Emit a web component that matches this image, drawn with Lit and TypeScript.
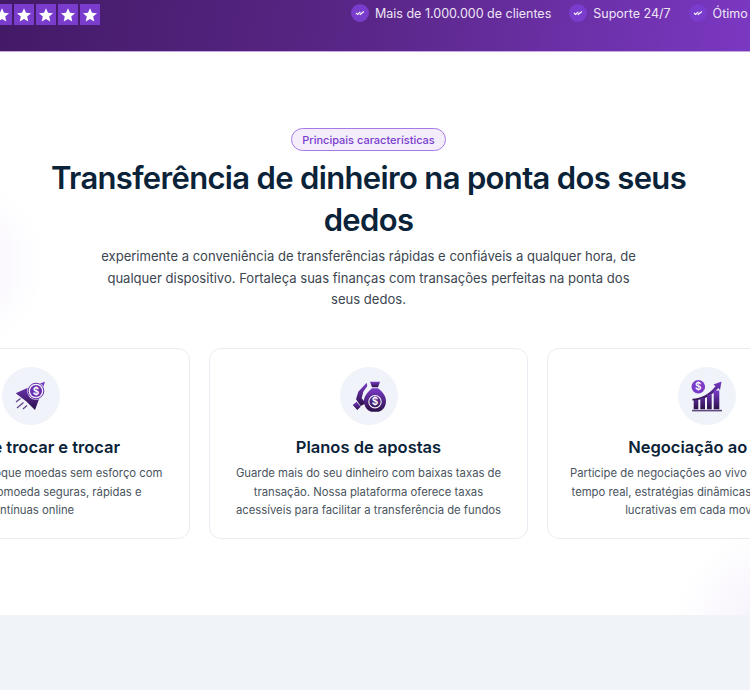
import { LitElement, html, css, svg } from "lit";
import { customElement } from "lit/decorators.js";

const star = html`<span class="star"><svg viewBox="0 0 20 20" width="20" height="20"><path d="M10 3.2l2 4.6 5 .5-3.8 3.3 1.1 4.9L10 14l-4.3 2.5 1.1-4.9L3 8.3l5-.5z" fill="#fff"/></svg></span>`;
const check = html`<span class="check"><svg viewBox="0 0 18 18" width="18" height="18"><path d="M5 9l1.6 1.400 2.700-2.600M8.700 10.200l.4.300 3.800-3" fill="none" stroke="#fff" stroke-width="1.100"/></svg></span>`;

const grad = (id: string) => svg`<defs><linearGradient id=${id} x1="0" y1="0" x2="0" y2="1"><stop offset="0" stop-color="#7a3bc8"/><stop offset="1" stop-color="#2b1048"/></linearGradient></defs>`;

const icon1 = html`<svg viewBox="0 0 58 58" width="58" height="58">${grad("g1")}
  <path d="M13.700 26.300L28 19.700L43 14.700L40 24L33 43L24.700 34.700z" fill="url(#g1)"/>
  <circle cx="34" cy="24" r="8.800" fill="#f0f3f9"/>
  <circle cx="34" cy="24" r="7.800" fill="none" stroke="#6a2fb0" stroke-width="1"/>
  <circle cx="34" cy="24" r="6" fill="#6a2fb0"/>
  <text x="34" y="27.600" text-anchor="middle" class="dollar" font-size="10">$</text>
  <path d="M14 35l4.500-3.500M15 41l6.500-5.500M21 42l4-3.500" stroke="#5b3a85" stroke-width="1.100" fill="none"/>
</svg>`;

const icon2 = html`<svg viewBox="0 0 58 58" width="58" height="58">${grad("g2")}
  <path d="M12.700 38L16.700 34.700L20.700 39.700L17.300 43z" fill="url(#g2)"/>
  <path d="M16 32.300L18.300 24.700L26.700 15.700L27.300 19L23.300 24.700L21.700 31.300L26 36.300L20.700 39z" fill="url(#g2)"/>
  <path d="M30 14.700h10l-2 5.600h-6z" fill="url(#g2)"/>
  <path d="M32 21.300h6c4 3 8 7.500 8 12.500 0 6-3.500 10.200-7.500 10.900h-7c-4-.7-7.500-4.900-7.500-10.900 0-5 4.500-9.500 8-12.500z" fill="url(#g2)"/>
  <circle cx="35" cy="34.700" r="6.200" fill="none" stroke="#f0f3f9" stroke-width="1.100"/>
  <text x="35" y="38.300" text-anchor="middle" class="dollar" font-size="10">$</text>
</svg>`;

const icon3 = html`<svg viewBox="0 0 58 58" width="58" height="58">${grad("g3")}
  <circle cx="20.300" cy="19.700" r="6.800" fill="#7a3bc8"/>
  <text x="20.300" y="23.300" text-anchor="middle" class="dollar" font-size="10">$</text>
  <path d="M14.500 31.800c9-.5 16-4 23-12.500l-2-1.700 8-3-1.500 8.300-1.800-1.800c-7 8.500-15 12-25.700 12.500z" fill="url(#g3)"/>
  <path d="M15.700 33h4.600v9.300h-4.600zM22.300 31h4.700v11.300h-4.700zM29 27.500h4.700v14.800H29zM35.700 23.500h5.600v18.800h-5.600z" fill="url(#g3)"/>
  <rect x="14" y="42.800" width="30" height="1.600" fill="#5f4a80"/>
</svg>`;

const cards = [
  { icon: icon1, title: "Fácil de trocar e trocar", lines: ["Compra, venda, troque moedas sem esforço com", "trocas de criptomoeda seguras, rápidas e", "contínuas online"] },
  { icon: icon2, title: "Planos de apostas", lines: ["Guarde mais do seu dinheiro com baixas taxas de", "transação. Nossa plataforma oferece taxas", "acessíveis para facilitar a transferência de fundos"] },
  { icon: icon3, title: "Negociação ao vivo", lines: ["Participe de negociações ao vivo com atualizações", "tempo real, estratégias dinâmicas e oportunidades", "lucrativas em cada movimento"] },
];

@customElement("app-root")
export class AppRoot extends LitElement {
  static styles = css`
    :host { display: block; width: 750px; height: 690px; overflow: hidden; font-family: "Inter", "Open Sans", sans-serif; background: #f0f3f8; }
    .bar { display: grid; grid-template-columns: 351px 1fr; height: 51px; padding-top: 4px; box-sizing: border-box; background: linear-gradient(100deg, #431a66 0%, #5a2789 50%, #7b38c2 100%); overflow: hidden; }
    .edge { height: 1px; background: #c6a9e2; }
    .stars { display: flex; gap: 2px; margin-left: -8px; height: 21px; }
    .star { display: flex; width: 20px; height: 21px; align-items: center; background: #7a3ccd; }
    .perks { display: flex; gap: 18px; height: 18px; white-space: nowrap; }
    .perk { display: flex; align-items: center; gap: 6px; font-size: 12.500px; color: #eee6f7; font-weight: 400; }
    .check { display: flex; width: 18px; height: 18px; border-radius: 50%; background: #7a3ccd; }
    .main { height: 563px; box-sizing: border-box; padding: 76px 13px 0 0; background:
        radial-gradient(circle at -40px 213px, #f6f1fc 0, #fff 85px) no-repeat left top / 120px 330px,
        radial-gradient(circle at 120px 100px, #f5f0fb 0, #fff 95px) no-repeat right bottom / 100px 90px,
        #fff; display: flex; flex-direction: column; align-items: center; }
    .pill { height: 23px; box-sizing: border-box; width: 155px; display: flex; align-items: center; justify-content: center; border: 1px solid #a67ae6; border-radius: 12px; background: #f4eefc; color: #7a3ccd; font-size: 11px; font-weight: 500; white-space: nowrap; }
    h1 { margin: 6px 0 5px; width: 660px; text-align: center; font-size: 31px; line-height: 42px; font-weight: 600; color: #0b2338; letter-spacing: -.66px; }
    .lead { margin: 0; width: 545px; text-align: center; font-size: 13.050px; line-height: 21.700px; color: #3c4650; }
    .cards { display: flex; gap: 19px; justify-content: center; margin-top: 37px; width: 737px; }
    .card { flex: none; width: 319px; height: 191px; box-sizing: border-box; border: 1px solid #e9ecf2; border-radius: 12px; background: #fff; padding: 18px 0 0; display: flex; flex-direction: column; align-items: center; text-align: center; }
    .disc { width: 58px; height: 58px; border-radius: 50%; background: #f0f3f9; flex: none; }
    .disc svg { display: block; }
    .dollar { fill: #fff; font-family: "Inter", sans-serif; font-weight: 600; }
    h3 { margin: 11px 0 6px; font-size: 16.500px; line-height: 22px; font-weight: 600; color: #0b2338; white-space: nowrap; }
    .card p { margin: 0; font-size: 11.300px; line-height: 18.500px; color: #4a545e; }
    .card p span { display: block; white-space: nowrap; }
  `;

  render() {
    return html`
      <div class="bar">
        <div class="stars">${star}${star}${star}${star}${star}</div>
        <div class="perks">
          <span class="perk">${check}Mais de 1.000.000 de clientes</span>
          <span class="perk">${check}Suporte 24/7</span>
          <span class="perk">${check}Ótimo atendimento</span>
        </div>
      </div>
      <div class="edge"></div>
      <section class="main">
        <div class="pill">Principais características</div>
        <h1>Transferência de dinheiro na ponta dos seus dedos</h1>
        <p class="lead">experimente a conveniência de transferências rápidas e confiáveis a qualquer hora, de qualquer dispositivo. Fortaleça suas finanças com transações perfeitas na ponta dos seus dedos.</p>
        <div class="cards">
          ${cards.map((c) => html`<article class="card"><div class="disc">${c.icon}</div><h3>${c.title}</h3><p>${c.lines.map((l) => html`<span>${l}</span>`)}</p></article>`)}
        </div>
      </section>
    `;
  }
}
